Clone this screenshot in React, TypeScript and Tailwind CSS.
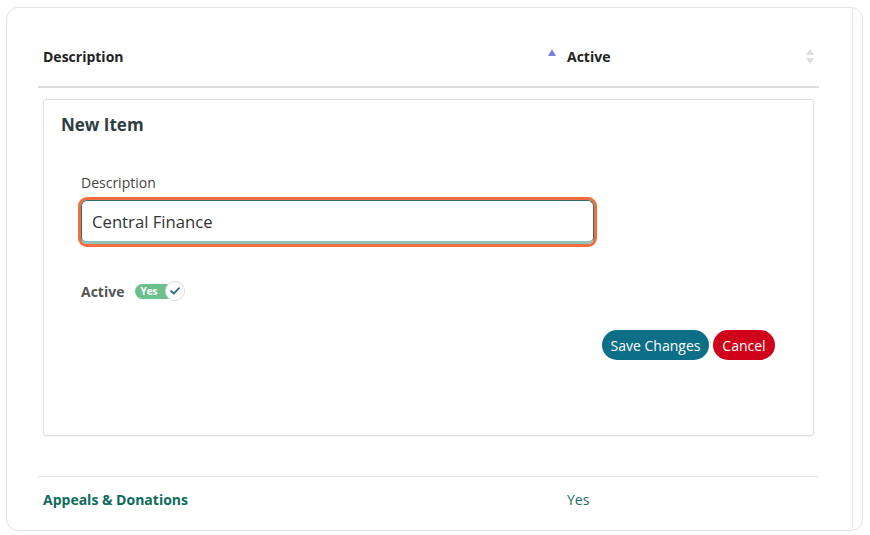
import React from 'react';

function SortUp() {
  return (
    <svg width="8" height="7" viewBox="0 0 8 7" className="mr-[11px] -mt-[8px]">
      <path d="M4 0 L8 7 L0 7 Z" fill="#7b7fd6" />
    </svg>
  );
}

function SortBoth() {
  return (
    <svg width="8" height="15" viewBox="0 0 8 15">
      <path d="M4 0 L8 6 L0 6 Z" fill="#dedede" />
      <path d="M4 15 L8 9 L0 9 Z" fill="#dedede" />
    </svg>
  );
}

function Toggle() {
  return (
    <div className="relative flex items-center h-[20px] w-[50px]">
      <div className="h-[15px] w-[40px] rounded-full bg-[#6cc08c] pl-[5px] flex items-center">
        <span className="text-[10px] font-bold text-white leading-none">Yes</span>
      </div>
      <div className="absolute right-0 top-0 h-[20px] w-[20px] rounded-full bg-white border border-[#dcdcdc] flex items-center justify-center">
        <svg width="10" height="8" viewBox="0 0 10 8">
          <path d="M1 4 L3.8 6.6 L9 1.2" fill="none" stroke="#2a6b7c" strokeWidth="1.8" strokeLinecap="round" strokeLinejoin="round" />
        </svg>
      </div>
    </div>
  );
}

export default function App() {
  return (
    <div className="min-h-screen bg-white pt-[7px] font-['Open_Sans',sans-serif]">
      <div className="ml-[6px] w-[857px] h-[524px] flex rounded-[12px] border border-[#e3e3e3] overflow-hidden">
        {/* content */}
        <div className="flex-1 pl-[31px] pr-[33px] pt-[18px]">
          {/* header row */}
          <div className="h-[62px] flex items-center border-b-2 border-[#dddddd]">
            <div className="w-[502px] pl-[5px] text-[14px] font-bold text-[#222]">Description</div>
            <div className="flex-1 flex items-center pl-[8px] pr-[5px]">
              <SortUp />
              <span className="text-[14px] font-bold text-[#222]">Active</span>
              <div className="flex-1" />
              <SortBoth />
            </div>
          </div>

          {/* edit panel */}
          <div className="mx-[5px] mt-[11px] h-[337px] border border-[#dedede] rounded-[3px] shadow-[0_1px_2px_rgba(0,0,0,0.06)] pt-[13px] px-[17px]">
            <h2 className="text-[17px] leading-[24px] font-bold text-[#2e3d44]">New Item</h2>
            <div className="px-[20px]">
              <label className="block mt-[36px] text-[14px] leading-[20px] text-[#444]">Description</label>
              <div className="mt-[7px] w-[513px] h-[44px] rounded-[6px] border border-[#2d6e66] border-b-[3px] border-b-[#8fc2b9] ring-[3px] ring-[#f86d3f] flex items-center pl-[10px] pt-[2px] text-[16.7px] text-[#333]">
                Central Finance
              </div>
              <div className="mt-[37px] h-[20px] flex items-center gap-[11px]">
                <span className="text-[14px] font-bold text-[#555]">Active</span>
                <Toggle />
              </div>
              <div className="mt-[29px] flex justify-end gap-[4px] pr-[1px]">
                <button className="h-[30px] w-[107px] rounded-full bg-[#0c6e87] text-white text-[14px]">Save Changes</button>
                <button className="h-[30px] w-[62px] rounded-full bg-[#d0021b] text-white text-[14px]">Cancel</button>
              </div>
            </div>
          </div>

          {/* data row */}
          <div className="mt-[40px] border-t border-[#e3e3e3] h-[44px] pt-[2px] flex items-center">
            <div className="w-[529px] pl-[5px] text-[14px] font-bold text-[#0c6b5c]">Appeals &amp; Donations</div>
            <div className="text-[14px] text-[#1d6e62]">Yes</div>
          </div>
        </div>
        {/* scroll strip */}
        <div className="w-[10px] border-l border-[#e6e6e6] bg-[#fdfdfd]" />
      </div>
    </div>
  );
}
